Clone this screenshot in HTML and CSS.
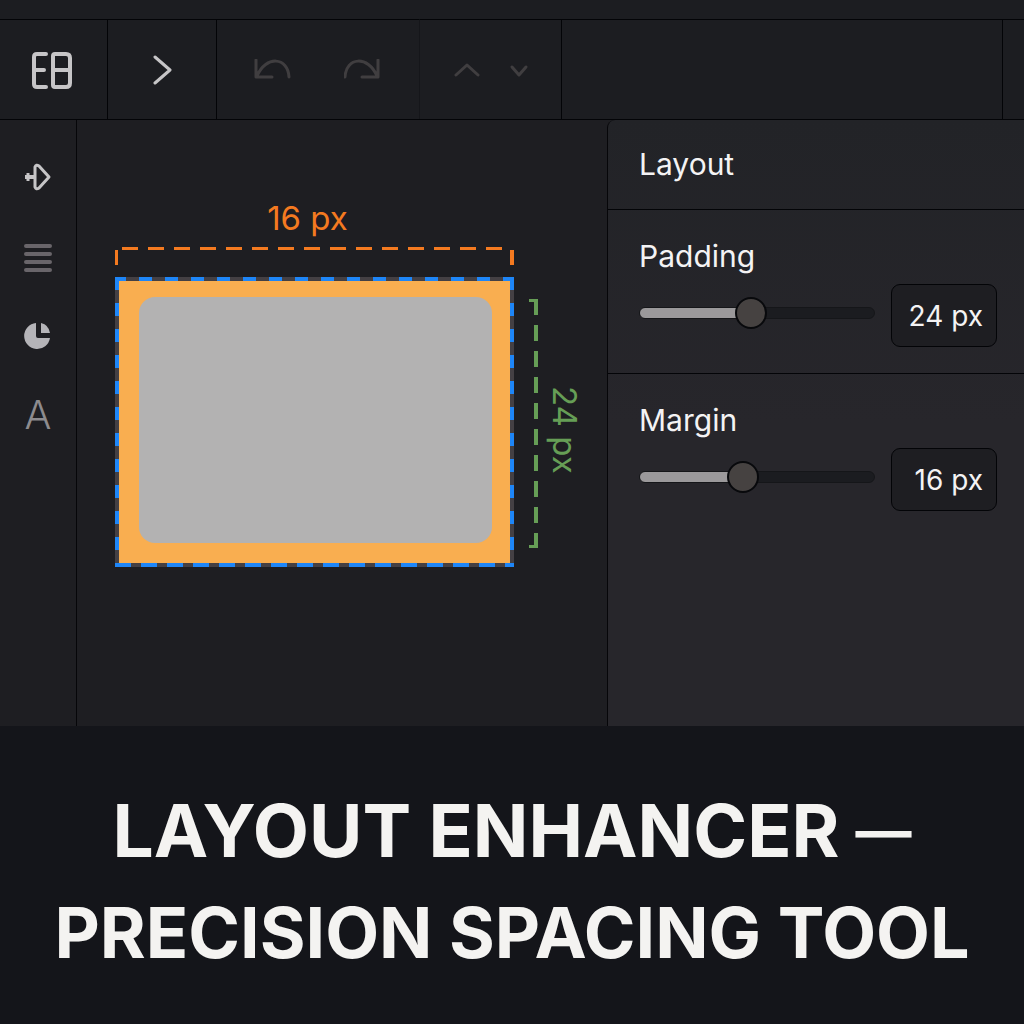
FILE: index.html
```html
<!DOCTYPE html>
<html lang="en">
<head>
<meta charset="utf-8">
<meta name="viewport" content="width=device-width, initial-scale=1">
<title>Layout Enhancer</title>
<link rel="stylesheet" href="styles.css">
</head>
<body>
<div class="app">
  <header class="toolbar">
    <div class="group group-brand">
      <button class="tool" type="button" aria-label="Home">
        <svg width="42" height="40" viewBox="0 0 42 40" fill="none" stroke="#c6c5c7" stroke-width="4" stroke-linecap="round" stroke-linejoin="round">
          <path d="M15 3H6Q3 3 3 6V33Q3 36 6 36H15M3 19H13"/>
          <path d="M22 5Q22 3 24 3H35Q39 3 39 7V32Q39 36 35 36H24Q22 36 22 34ZM22 19H39"/>
        </svg>
      </button>
    </div>
    <div class="group group-next">
      <button class="tool" type="button" aria-label="Next">
        <svg width="20" height="32" viewBox="0 0 20 32" fill="none" stroke="#c6c5c7" stroke-width="3" stroke-linecap="round" stroke-linejoin="round"><path d="M3 2L18 15L3 28"/></svg>
      </button>
    </div>
    <div class="group group-history">
      <button class="tool" type="button" aria-label="Undo">
        <svg width="38" height="24" viewBox="0 0 38 24" fill="none" stroke="#403e40" stroke-width="3" stroke-linecap="round" stroke-linejoin="round"><path d="M2 1V18H18M3 17C12 -4 34 -2 35 18"/></svg>
      </button>
      <button class="tool" type="button" aria-label="Redo">
        <svg width="38" height="24" viewBox="0 0 38 24" fill="none" stroke="#403e40" stroke-width="3" stroke-linecap="round" stroke-linejoin="round"><path d="M34 1V18H18M33 17C24 -4 2 -2 1 18"/></svg>
      </button>
    </div>
    <div class="group group-order">
      <button class="tool" type="button" aria-label="Move up">
        <svg width="28" height="16" viewBox="0 0 28 16" fill="none" stroke="#403e40" stroke-width="3" stroke-linecap="round" stroke-linejoin="round"><path d="M3 12L14 2L25 12"/></svg>
      </button>
      <button class="tool" type="button" aria-label="Move down">
        <svg width="20" height="14" viewBox="0 0 20 14" fill="none" stroke="#403e40" stroke-width="3" stroke-linecap="round" stroke-linejoin="round"><path d="M3 3L10 11L17 3"/></svg>
      </button>
    </div>
    <div class="group group-space"></div>
    <div class="group group-end"></div>
  </header>

  <main class="workspace">
    <nav class="sidebar" aria-label="Tools">
      <button class="side-tool" type="button" aria-label="Insert">
        <svg width="28" height="30" viewBox="0 0 28 30" fill="none" stroke="#c6c5c7" stroke-width="3" stroke-linejoin="round"><path d="M11 4Q12 1 15 3L25 14L15 25Q12 27 11 24Z"/><path d="M1 14H10" stroke-width="4"/><path d="M4 10V18"/></svg>
      </button>
      <button class="side-tool" type="button" aria-label="List">
        <svg width="30" height="30" viewBox="0 0 30 30" stroke="#69656a" stroke-width="4" stroke-linecap="round"><path d="M3 4H27M3 12H27M3 20H27M3 28H27"/></svg>
      </button>
      <button class="side-tool" type="button" aria-label="Chart">
        <svg width="30" height="28" viewBox="0 0 30 28" fill="#b5b4b8"><path d="M13 1A13 13 0 1 0 27 16H15Q13 16 13 14Z"/><path d="M18 1A12 12 0 0 1 27 11H18Z"/></svg>
      </button>
      <button class="side-tool side-text" type="button" aria-label="Text">A</button>
    </nav>

    <section class="canvas" aria-label="Canvas">
      <div class="margin-label">16 px</div>
      <div class="margin-rule"></div>
      <div class="frame"><div class="frame-padding"><div class="content-box"></div></div></div>
      <div class="padding-rule"></div>
      <div class="padding-label">24 px</div>
    </section>

    <aside class="panel">
      <h2 class="panel-title">Layout</h2>
      <div class="field">
        <label class="field-label" for="padding">Padding</label>
        <div class="field-row">
          <input class="slider" id="padding" type="range" min="0" max="51" value="24" style="--fill: 47%">
          <input class="value" type="text" value="24 px" aria-label="Padding value">
        </div>
      </div>
      <div class="field">
        <label class="field-label" for="margin">Margin</label>
        <div class="field-row">
          <input class="slider" id="margin" type="range" min="0" max="37" value="16" style="--fill: 43%">
          <input class="value" type="text" value="16 px" aria-label="Margin value">
        </div>
      </div>
    </aside>
  </main>

  <footer class="banner">
    <h1 class="banner-title">
      <span class="banner-name"><span>LAYOUT ENHANCER</span> <span class="banner-dash">—</span></span>
      <span class="banner-tagline">PRECISION SPACING TOOL</span>
    </h1>
  </footer>
</div>
</body>
</html>
```
FILE: styles.css
```css
* {
  box-sizing: border-box;
}

body {
  margin: 0;
  background: #14151a;
  color: #f4f3f4;
  font-family: Inter, "Liberation Sans", sans-serif;
}

button {
  padding: 0;
  border: 0;
  background: none;
  font: inherit;
}

svg {
  display: block;
}

.app {
  display: flex;
  flex-direction: column;
  min-height: 100vh;
}

/* Toolbar */

.toolbar {
  display: flex;
  height: 120px;
  padding-top: 19px;
  background: #1c1d21;
  border-bottom: 1px solid #030407;
}

.group {
  display: flex;
  align-items: center;
  justify-content: center;
  padding-top: 2px;
  border-top: 1px solid #030407;
  border-right: 1px solid #030407;
}

.group-brand {
  width: 108px;
  padding-right: 4px;
}

.group-next {
  width: 109px;
}

.group-history {
  width: 203px;
  gap: 52px;
  border-right-color: #15161a;
}

.group-order {
  width: 142px;
  gap: 28px;
}

.group-space {
  flex: 1;
}

.group-end {
  width: 21px;
  border-right: 0;
}

/* Workspace */

.workspace {
  display: flex;
  min-height: 606px;
  background: #1e1e22;
}

.sidebar {
  display: flex;
  flex-direction: column;
  width: 77px;
  padding-top: 18px;
  border-right: 1px solid #060609;
}

.side-tool {
  display: flex;
  align-items: center;
  justify-content: center;
  height: 79px;
}

.side-text {
  color: #8d8b8e;
  font-size: 40px;
  font-weight: 300;
}

.canvas {
  display: grid;
  flex: 1;
  grid-template-columns: 1fr 9px 40px;
  grid-template-rows: 40px 30px auto;
  column-gap: 15px;
  align-content: start;
  min-width: 0;
  padding: 78px 14px 40px 38px;
}

.margin-label {
  grid-column: 1;
  padding-right: 14px;
  color: #f47a20;
  font-size: 33px;
  line-height: 40px;
  text-align: center;
}

.margin-rule {
  grid-row: 2;
  margin-top: 9px;
  height: 18px;
  background:
    repeating-linear-gradient(90deg, #f47a20 0 16px, transparent 16px 26px) 7px 0 / calc(100% - 16px) 3px no-repeat,
    linear-gradient(#f47a20, #f47a20) 0 100% / 3px 15px no-repeat,
    linear-gradient(#f47a20, #f47a20) 100% 100% / 4px 15px no-repeat;
}

.frame {
  grid-row: 3;
  margin-top: 9px;
  padding: 4px;
  aspect-ratio: 399 / 290;
  background:
    repeating-linear-gradient(#1e86f8 0 13px, #444044 13px 26px) 0 0 / 4px 100% no-repeat,
    repeating-linear-gradient(#1e86f8 0 13px, #444044 13px 26px) 100% 0 / 4px 100% no-repeat,
    repeating-linear-gradient(90deg, #1e86f8 0 11px, #444044 11px 24px, #1e86f8 24px 26px) 0 0 / 100% 4px no-repeat,
    repeating-linear-gradient(90deg, #1e86f8 0 16px, #444044 16px 26px) 0 100% / 100% 4px no-repeat;
}

.frame-padding {
  height: 100%;
  padding: 16px 18px 20px 20px;
  background: #f9ae50;
}

.content-box {
  height: 100%;
  border-radius: 16px;
  background: #b3b2b2;
}

.padding-rule {
  grid-row: 3;
  grid-column: 2;
  margin: 31px 0 19px;
  background:
    linear-gradient(#669e56, #669e56) 0 0 / 100% 3px no-repeat,
    linear-gradient(#669e56, #669e56) 0 100% / 100% 3px no-repeat,
    repeating-linear-gradient(#669e56 0 16px, transparent 16px 26px) 100% 0 / 4px 100% no-repeat;
}

.padding-label {
  grid-row: 3;
  grid-column: 3;
  justify-self: start;
  align-self: center;
  margin-left: -8px;
  padding-top: 24px;
  color: #669e56;
  font-size: 33px;
  line-height: 40px;
  writing-mode: vertical-rl;
}

/* Settings panel */

.panel {
  width: 417px;
  border-left: 1px solid #060609;
  border-top-left-radius: 8px;
  background: linear-gradient(#222327, #27262b 50%);
}

.panel-title {
  margin: 0;
  padding: 24px 31px 25px;
  font-size: 30px;
  font-weight: 400;
  line-height: 40px;
}

.field {
  height: 164px;
  padding: 26px 27px 24px 31px;
  border-top: 1px solid #030407;
}

.field-label {
  display: block;
  font-size: 30px;
  line-height: 40px;
}

.field-row {
  display: flex;
  align-items: center;
  gap: 16px;
  margin-top: 8px;
}

.slider {
  flex: 1;
  min-width: 0;
  height: 32px;
  margin: 0 0 6px;
  appearance: none;
  background: none;
}

.slider::-webkit-slider-runnable-track {
  height: 12px;
  border: 1px solid #151619;
  border-radius: 6px;
  background: linear-gradient(90deg, #9b999b var(--fill), #1b1c20 var(--fill));
}

.slider::-webkit-slider-thumb {
  width: 32px;
  height: 32px;
  margin-top: -11px;
  appearance: none;
  border: 2px solid #08090c;
  border-radius: 50%;
  background: #464241;
}

.value {
  width: 106px;
  height: 63px;
  padding: 0 13px;
  border: 1px solid #030407;
  border-radius: 9px;
  background: #1e1e22;
  color: #f4f3f4;
  font: inherit;
  font-size: 28px;
  text-align: right;
}

/* Banner */

.banner {
  flex: 1;
  padding: 54px 16px 40px;
  background: #14151a;
}

.banner-title {
  margin: 0;
  color: #f4f3f1;
  font-size: 70px;
  font-weight: 700;
  line-height: 102px;
  text-align: center;
}

.banner-name {
  display: flex;
  align-items: center;
  justify-content: center;
  gap: 16px;
  font-size: 73px;
}

.banner-dash {
  font-size: 56px;
}

.banner-tagline {
  display: block;
}
```
